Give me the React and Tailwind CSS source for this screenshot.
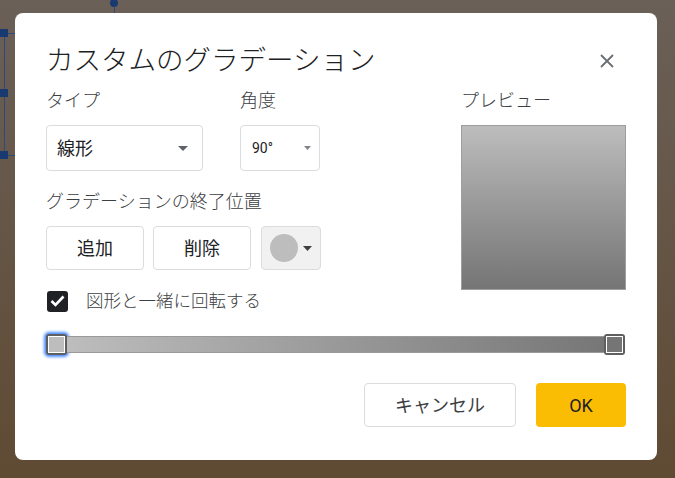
import React from 'react';

const Caret = ({ w = 10, h = 5, color = '#5f6368' }) => (
  <svg width={w} height={h} viewBox={`0 0 ${w} ${h}`}>
    <path d={`M0 0 L${w} 0 L${w / 2} ${h} Z`} fill={color} />
  </svg>
);

const Handle = ({ fill, glow }) => (
  <div
    className={`w-[21px] h-[21px] rounded-[3px] bg-[#5f5f5f] p-[2px] shrink-0 ${
      glow ? 'shadow-[0_0_3px_2px_#4a8cff]' : ''
    }`}
  >
    <div className={`w-full h-full border border-white ${fill}`} />
  </div>
);

export default function App() {
  return (
    <div
      className="relative w-[675px] h-[478px] overflow-hidden bg-gradient-to-b from-[#6a6058] to-[#5f4a33] pt-[13px] pl-[15px] font-light"
      style={{ fontFamily: 'Roboto, "Noto Sans CJK JP", sans-serif' }}
    >
      {/* canvas selection behind the dialog */}
      <div className="absolute left-[4px] top-[33px] w-px h-[122px] bg-[#2c4a80]" />
      <div className="absolute left-[4px] top-[33px] w-[20px] h-px bg-[#2c4a80]" />
      <div className="absolute left-[4px] top-[155px] w-[20px] h-px bg-[#2c4a80]" />
      <div className="absolute left-0 top-[29px] w-[8px] h-[8px] bg-[#183a70]" />
      <div className="absolute left-0 top-[89px] w-[8px] h-[8px] bg-[#183a70]" />
      <div className="absolute left-0 top-[151px] w-[8px] h-[8px] bg-[#183a70]" />
      <div className="absolute left-[110px] top-[-1px] w-[8px] h-[8px] rounded-full bg-[#183a70]" />
      <div className="absolute left-[114px] top-[6px] w-px h-[8px] bg-[#2c4a80]" />

      <div className="relative w-[642px] h-[447px] bg-white rounded-[8px] pl-[31px] pr-[31px] pt-[29px]">
        {/* title */}
        <div className="flex items-center justify-between h-[38px]">
          <h1 className="text-[27.5px] leading-[38px] text-[#202124] font-light">カスタムのグラデーション</h1>
          <svg width="14" height="14" viewBox="0 0 14 14" className="mr-[12px]">
            <path d="M1 1 L13 13 M13 1 L1 13" stroke="#6a6e72" strokeWidth="1.8" />
          </svg>
        </div>

        <div className="flex mt-[9px]">
          {/* left column */}
          <div className="w-[415px]">
            <div className="flex">
              <div className="w-[194px]">
                <div className="text-[18px] leading-[24px] text-[#3c4043]">タイプ</div>
                <div className="mt-[12px] w-[157px] h-[46px] border border-[#dadce0] rounded-[4px] flex items-center justify-between pl-[10px] pr-[14px]">
                  <span className="text-[18px] text-[#202124] font-normal">線形</span>
                  <Caret w={10} h={5} color="#5f6368" />
                </div>
              </div>
              <div>
                <div className="text-[18px] leading-[24px] text-[#3c4043]">角度</div>
                <div className="mt-[12px] w-[80px] h-[46px] border border-[#dadce0] rounded-[4px] flex items-center justify-between pl-[11px] pr-[8px]">
                  <span className="text-[14px] text-[#202124] font-normal">90°</span>
                  <Caret w={7} h={4} color="#80868b" />
                </div>
              </div>
            </div>

            <div className="mt-[19px] text-[18px] leading-[24px] text-[#3c4043]">グラデーションの終了位置</div>
            <div className="mt-[12px] flex gap-[9px]">
              <div className="w-[98px] h-[44px] border border-[#dadce0] rounded-[4px] flex items-center justify-center text-[18px] text-[#202124] font-normal">
                追加
              </div>
              <div className="w-[98px] h-[44px] border border-[#dadce0] rounded-[4px] flex items-center justify-center text-[18px] text-[#202124] font-normal">
                削除
              </div>
              <div className="ml-[1px] w-[60px] h-[44px] border border-[#dadce0] bg-[#f1f1f1] rounded-[4px] flex items-center pl-[8px] gap-[5px]">
                <div className="w-[28px] h-[28px] rounded-full bg-[#bdbdbd]" />
                <Caret w={9} h={5} color="#3c4043" />
              </div>
            </div>

            <div className="mt-[19px] flex items-center h-[24px]">
              <div className="ml-[1px] w-[21px] h-[21px] rounded-[3px] bg-[#202124] flex items-center justify-center">
                <svg width="15" height="12" viewBox="0 0 15 12">
                  <path d="M1.5 6 L5.5 10 L13.5 1.5" stroke="#fff" strokeWidth="2.6" fill="none" />
                </svg>
              </div>
              <span className="ml-[18px] text-[17.5px] text-[#3c4043]">図形と一緒に回転する</span>
            </div>
          </div>

          {/* preview */}
          <div>
            <div className="text-[18px] leading-[24px] text-[#3c4043]">プレビュー</div>
            <div className="mt-[12px] w-[165px] h-[165px] border border-[#9e9e9e] bg-gradient-to-b from-[#bdbdbd] to-[#757575]" />
          </div>
        </div>

        {/* gradient slider */}
        <div className="mt-[21px] flex items-center w-[579px]">
          <Handle fill="bg-[#bdbdbd]" glow />
          <div className="flex-1 h-[17px] border-y border-[#9a9a9a] bg-gradient-to-r from-[#bdbdbd] to-[#777777]" />
          <Handle fill="bg-[#757575]" />
        </div>

        {/* actions */}
        <div className="mt-[28px] flex justify-end gap-[20px]">
          <div className="w-[152px] h-[44px] border border-[#dadce0] rounded-[4px] flex items-center justify-center text-[18px] text-[#3c4043] font-normal">
            キャンセル
          </div>
          <div className="w-[90px] h-[44px] bg-[#fbbc04] rounded-[4px] flex items-center justify-center text-[18px] text-[#202124] font-normal">
            OK
          </div>
        </div>
      </div>
    </div>
  );
}
